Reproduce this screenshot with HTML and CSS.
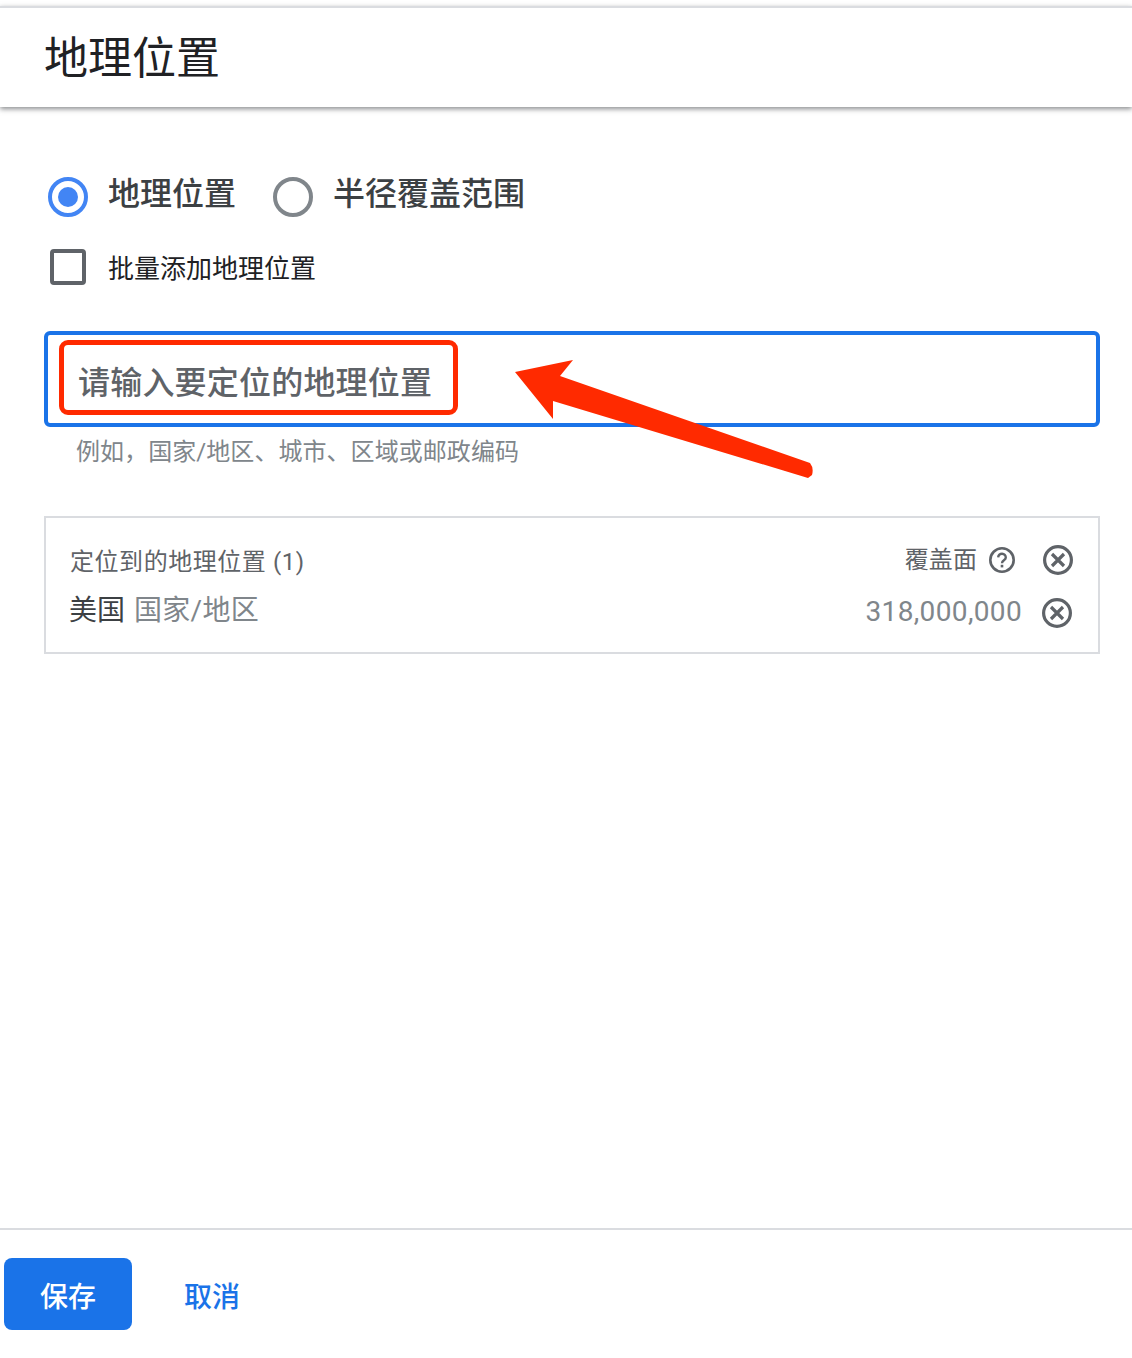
FILE: index.html
```html
<!DOCTYPE html>
<html lang="zh-CN">
<head>
<meta charset="utf-8">
<title>地理位置</title>
<link rel="stylesheet" href="styles.css">
</head>
<body>
<div class="page">
  <header class="header"><h1 class="title">地理位置</h1></header>
  <main class="main">
    <div class="radios">
      <span class="radio radio-on"></span><span class="radio-label">地理位置</span>
      <span class="radio radio-off"></span><span class="radio-label">半径覆盖范围</span>
    </div>
    <div class="check-row">
      <span class="checkbox"></span><span class="check-label">批量添加地理位置</span>
    </div>
    <div class="input">
      <span class="placeholder">请输入要定位的地理位置</span>
      <span class="annot-box"></span>
    </div>
    <div class="hint">例如，国家/地区、城市、区域或邮政编码</div>
    <section class="targets">
      <div class="targets-head">
        <span class="targets-title">定位到的地理位置 (1)</span>
        <span class="targets-reach">覆盖面</span>
        <svg class="icon-help" width="26" height="26" viewBox="0 0 26 26"><circle cx="13" cy="13" r="11.7" fill="none" stroke="#5f6368" stroke-width="2.6"/><path d="M9.2 10.4a3.8 3.8 0 0 1 7.6.2c0 2.8-3.8 2.6-3.8 5.6" fill="none" stroke="#5f6368" stroke-width="2.4"/><rect x="11.7" y="17.8" width="2.6" height="2.6" fill="#5f6368"/></svg>
        <svg class="icon-x" width="30" height="30" viewBox="0 0 30 30"><circle cx="15" cy="15" r="13.4" fill="none" stroke="#5f6368" stroke-width="3.2"/><path d="M9 9l12 12M21 9L9 21" fill="none" stroke="#5f6368" stroke-width="3.2"/></svg>
      </div>
      <div class="targets-row">
        <span class="place">美国</span>
        <span class="place-type">国家/地区</span>
        <span class="reach-num">318,000,000</span>
        <svg class="icon-x" width="30" height="30" viewBox="0 0 30 30"><circle cx="15" cy="15" r="13.4" fill="none" stroke="#5f6368" stroke-width="3.2"/><path d="M9 9l12 12M21 9L9 21" fill="none" stroke="#5f6368" stroke-width="3.2"/></svg>
      </div>
    </section>
  </main>
  <footer class="footer">
    <button class="btn-save">保存</button>
    <button class="btn-cancel">取消</button>
  </footer>
  <svg class="arrow" width="320" height="130" viewBox="0 0 320 130"><path d="M5 22L63 10L50 26L300 113Q304 118 302 125L298 128L43 51V69Z" fill="#ff2a00"/></svg>
</div>
</body>
</html>
```

FILE: styles.css
```css
* { box-sizing: border-box; }
html, body { margin: 0; padding: 0; background: #fff; }
body { font-family: Roboto, "Noto Sans CJK SC", sans-serif; color: #202124; }
.page { position: relative; width: 1132px; height: 1358px; display: flex; flex-direction: column; padding-top: 6px; overflow: hidden; }
.header { height: 101px; border-top: 2px solid #dadce0; padding-left: 44px; display: flex; align-items: center; box-shadow: 0 2px 5px rgba(60,64,67,.6); }
.title { margin: 0; padding-top: 2px; font-size: 44px; font-weight: 400; line-height: 1; color: #202124; }
.main { flex: 1; padding: 0 32px 0 44px; }
.radios { display: flex; align-items: center; margin-top: 70px; height: 40px; padding-left: 4px; }
.radio { width: 40px; height: 40px; border-radius: 50%; border: 4px solid; flex: none; display: flex; align-items: center; justify-content: center; }
.radio-on { border-color: #4285f4; }
.radio-on::after { content: ""; width: 20px; height: 20px; border-radius: 50%; background: #4285f4; }
.radio-off { border-color: #80868b; }
.radio-label { font-size: 32px; font-weight: 500; line-height: 40px; color: #3c4043; margin-left: 20px; margin-right: 37px; padding-bottom: 6px; }
.radio-label:last-child { margin-right: 0; }
.check-row { display: flex; align-items: center; margin-top: 32px; height: 36px; padding-left: 6px; }
.checkbox { width: 36px; height: 36px; border: 4px solid #5f6368; border-radius: 4px; flex: none; }
.check-label { font-size: 26px; line-height: 36px; margin-left: 22px; padding-top: 4px; }
.input { position: relative; height: 96px; margin-top: 46px; border: 4px solid #1a73e8; border-radius: 6px; display: flex; align-items: center; padding-left: 30px; }
.placeholder { font-size: 32px; font-weight: 500; letter-spacing: .2px; color: #5f6368; line-height: 40px; padding-top: 8px; }
.annot-box { position: absolute; left: 11px; top: 5px; width: 399px; height: 75px; border: 5px solid #ff2a00; border-radius: 9px; }
.hint { font-size: 24px; line-height: 30px; letter-spacing: .06px; color: #80868b; padding-left: 32px; margin-top: 10px; }
.targets { margin-top: 49px; height: 138px; border: 2px solid #dadce0; padding: 0 25px 0 24px; }
.targets-head { display: flex; align-items: center; height: 30px; margin-top: 27px; }
.targets-title { font-size: 24px; letter-spacing: .55px; color: #5f6368; flex: 1; padding-bottom: 2px; }
.targets-reach { font-size: 24px; letter-spacing: .1px; color: #5f6368; padding-bottom: 6px; }
.icon-help { margin-left: 12px; flex: none; }
.targets-head .icon-x { margin-left: 28px; flex: none; }
.targets-row { display: flex; align-items: center; height: 30px; margin-top: 22px; }
.place { font-size: 28px; color: #3c4043; margin-left: -1px; padding-bottom: 8px; }
.place-type { font-size: 28px; letter-spacing: .3px; color: #80868b; margin-left: 9px; flex: 1; padding-bottom: 8px; }
.reach-num { font-size: 28px; letter-spacing: .35px; color: #80868b; padding-bottom: 2px; }
.targets-row .icon-x { margin: 2px 1px 0 20px; flex: none; }
.footer { height: 130px; border-top: 2px solid #dadce0; display: flex; align-items: flex-start; padding: 28px 0 0 4px; }
.btn-save { width: 128px; height: 72px; border: 0; border-radius: 8px; background: #1a73e8; color: #fff; font: 500 28px Roboto, "Noto Sans CJK SC", sans-serif; padding: 2px 0 0; }
.btn-cancel { width: 54px; height: 72px; margin-left: 52px; border: 0; background: none; color: #1a73e8; font: 500 28px Roboto, "Noto Sans CJK SC", sans-serif; padding: 2px 0 0; white-space: nowrap; }
.arrow { position: absolute; left: 510px; top: 350px; }
```
